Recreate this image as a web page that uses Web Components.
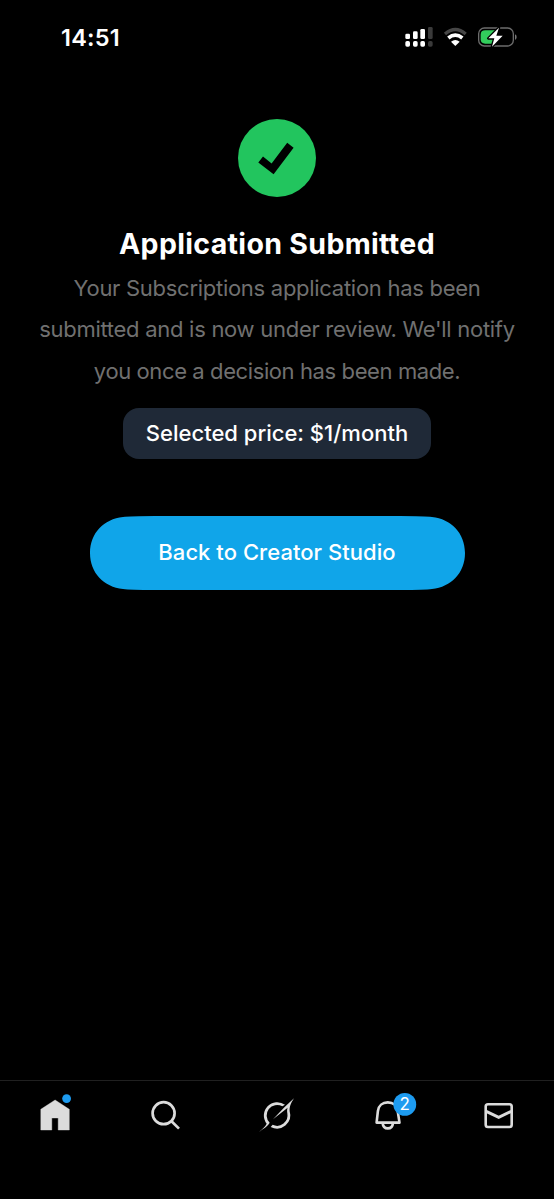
<!DOCTYPE html>
<html lang="en">
<head>
<meta charset="utf-8">
<title>Application Submitted</title>
<style>
html, body { margin: 0; background: #000; }
body { font-family: Inter, "Liberation Sans", sans-serif; color: #fff; }
</style>
</head>
<body>
<app-screen>
  <status-bar slot="status">14:51</status-bar>
  <result-panel>
    <span slot="title">Application Submitted</span>
    <span slot="line1">Your Subscriptions application has been</span>
    <span slot="line2">submitted and is now under review. We'll notify</span>
    <span slot="line3">you once a decision has been made.</span>
    <price-pill slot="price">Selected price: $1/month</price-pill>
    <primary-button slot="action">Back to Creator Studio</primary-button>
  </result-panel>
  <tab-bar slot="tabs">
    <tab-item icon="home"></tab-item>
    <tab-item icon="search"></tab-item>
    <tab-item icon="grok"></tab-item>
    <tab-item icon="bell"><span>2</span></tab-item>
    <tab-item icon="mail"></tab-item>
  </tab-bar>
</app-screen>
<script>
function define(name, html) {
  customElements.define(name, class extends HTMLElement {
    constructor() {
      super();
      this.attachShadow({ mode: 'open' }).innerHTML = html;
    }
  });
}

define('app-screen', `
<style>
:host { display: flex; flex-direction: column; height: 1199px; background: #000; overflow: hidden; }
main { flex: 1; }
</style>
<slot name="status"></slot><main><slot></slot></main><slot name="tabs"></slot>`);

define('status-bar', `
<style>
:host { display: flex; justify-content: space-between; align-items: center; box-sizing: border-box; height: 75px; padding: 0 24px 0 61px; }
.time { font-size: 23.5px; font-weight: 600; line-height: 30px; letter-spacing: .25px; }
svg { display: block; }
</style>
<span class="time"><slot></slot></span>
<svg width="140" height="45" viewBox="0 0 420 135">
  <g fill="#fff">
    <rect x="46" y="56" width="14" height="16" rx="4"/><rect x="69" y="49" width="14" height="23" rx="4"/><rect x="91" y="42" width="14" height="30" rx="4"/>
    <rect x="46" y="78" width="14" height="17" rx="5"/><rect x="69" y="78" width="14" height="17" rx="5"/><rect x="91" y="78" width="14" height="17" rx="5"/>
  </g>
  <g fill="#3a3a3a"><rect x="114" y="36" width="14" height="36" rx="4"/><rect x="114" y="78" width="14" height="17" rx="5"/></g>
  <path d="M165 57Q196 30 227 57" fill="none" stroke="#464646" stroke-width="10"/>
  <path d="M175 69Q196 52 217 69" fill="none" stroke="#fff" stroke-width="11"/>
  <path d="M183 80Q196 70 209 80L196 93Z" fill="#fff"/>
  <rect x="266" y="39" width="104" height="54" rx="17" fill="none" stroke="#6c6c6c" stroke-width="4"/>
  <path d="M375 58Q380 60 380 66Q380 72 375 75Z" fill="#777"/>
  <path d="M286 46H319V86H286Q272 86 272 73V59Q272 46 286 46Z" fill="#32cd5c"/>
  <path d="M327 38L295 70H313L306 95L338 62H319Z" fill="#fff" stroke="#000" stroke-width="8" paint-order="stroke" stroke-linejoin="round"/>
</svg>`);

define('result-panel', `
<style>
:host { display: flex; flex-direction: column; align-items: center; padding-top: 44px; }
.check { display: block; width: 78px; height: 78px; }
h1 { margin: 27px 0 0; font-size: 28.5px; line-height: 40px; font-weight: 700; letter-spacing: .33px; white-space: nowrap; }
p { margin: 4px 0 0; display: flex; flex-direction: column; align-items: center; font-size: 22px; line-height: 41.4px; letter-spacing: -.28px; color: #707070; white-space: nowrap; }
.l1, .l2, .l3 { display: block; }
.l3 { letter-spacing: -.4px; }
.price { margin-top: 16px; }
.action { margin-top: 57px; }
</style>
<svg class="check" viewBox="0 0 78 78"><circle cx="39" cy="39" r="39" fill="#22c55e"/><path d="M20.3 43.4L25 37.6L33.6 44.6L49.2 23.8L55.6 28.8L35.6 55.2Z" fill="#000"/></svg>
<h1><slot name="title"></slot></h1>
<p><span class="l1"><slot name="line1"></slot></span><span class="l2"><slot name="line2"></slot></span><span class="l3"><slot name="line3"></slot></span></p>
<div class="price"><slot name="price"></slot></div>
<div class="action"><slot name="action"></slot></div>`);

define('price-pill', `
<style>
:host { display: flex; justify-content: center; align-items: center; box-sizing: border-box; width: 308px; height: 51px; padding-bottom: 2px; border-radius: 16px; background: #1f2937; font-size: 22px; font-weight: 500; line-height: 30px; white-space: nowrap; }
</style><span><slot></slot></span>`);

define('primary-button', `
<style>
:host { display: block; }
button { all: unset; display: grid; width: 375px; height: 74px; cursor: pointer; font-size: 22px; font-weight: 500; line-height: 30px; letter-spacing: .04px; white-space: nowrap; }
svg, span { grid-area: 1 / 1; }
span { place-self: center; padding-bottom: 2px; }
</style>
<button><svg width="375" height="74" viewBox="0 0 375 74"><path d="M0 37C0 17 14 3 33 1Q40 0 65 0H310Q335 0 342 1C361 3 375 17 375 37C375 57 361 71 342 73Q335 74 310 74H65Q40 74 33 73C14 71 0 57 0 37Z" fill="#10a5e9"/></svg><span><slot></slot></span></button>`);

define('tab-bar', `
<style>
:host { display: grid; grid-template-columns: repeat(5, 1fr); box-sizing: border-box; height: 119px; padding-top: 4px; border-top: 1px solid #202020; }
</style><slot></slot>`);

const icons = {
  home: `<svg viewBox="25.4 1085 60 60"><path d="M55.5 1100L69.7 1109.3V1130H58.6V1118H52.2V1130H41.2V1109.3Z" fill="#dcdcdc" stroke="#dcdcdc" stroke-width=".4" stroke-linejoin="round"/><circle cx="67" cy="1098.6" r="4.4" fill="#1d9bf0"/></svg>`,
  search: `<svg viewBox="136.2 1085 60 60"><g fill="none" stroke="#dcdcdc" stroke-width="2.7"><circle cx="163.8" cy="1113.2" r="11"/><path d="M171.7 1121.2L179.2 1128.6"/></g></svg>`,
  grok: `<svg viewBox="21 45 180 180"><g fill="#dcdcdc"><path d="M135 104A40 40 0 0 0 80 161C76 170 66 177 57 186C68 178 84 169 89 158.500A31.500 31.500 0 0 1 127 109Z"/><path d="M162 85C152 101 148 110 149 124A40 40 0 0 1 92 171L98 164.500A31.500 31.500 0 0 0 142 130C141 123 141 117 143 113L99 148L134 111Z"/></g></svg>`,
  bell: `<svg viewBox="357.8 1085 60 60"><g fill="none" stroke="#dcdcdc" stroke-width="2.6" stroke-linejoin="round"><path d="M376.400 1122.600L377.700 1111C378.300 1105.500 382.300 1102.400 387.600 1102.400S396.900 1105.500 397.500 1111L399.300 1122.600Z"/><path d="M382.400 1123C383.100 1130.200 392.100 1130.200 392.800 1123"/></g><circle cx="404.6" cy="1104.4" r="11.4" fill="#1d9bf0"/></svg>`,
  mail: `<svg viewBox="468.600 1085 60 60"><g fill="none" stroke="#dcdcdc" stroke-width="2.600"><rect x="485.300" y="1104.200" width="26" height="22.800" rx="2.300"/><path d="M485.800 1111.300L498.300 1117.400L510.800 1111.300" stroke-width="3"/></g></svg>`
};

customElements.define('tab-item', class extends HTMLElement {
  constructor() {
    super();
    this.attachShadow({ mode: 'open' });
  }
  connectedCallback() {
    this.shadowRoot.innerHTML = `
<style>
:host { display: flex; justify-content: center; align-items: flex-start; }
.icon { position: relative; width: 60px; height: 60px; }
svg { display: block; width: 60px; height: 60px; }
.badge { position: absolute; left: 35.400px; top: 8px; width: 23px; text-align: center; font: 17px/23px Inter, "Liberation Sans", sans-serif; color: #fff; }
</style>
<div class="icon">${icons[this.getAttribute('icon')]}<div class="badge"><slot></slot></div></div>`;
  }
});
</script>
</body>
</html>
